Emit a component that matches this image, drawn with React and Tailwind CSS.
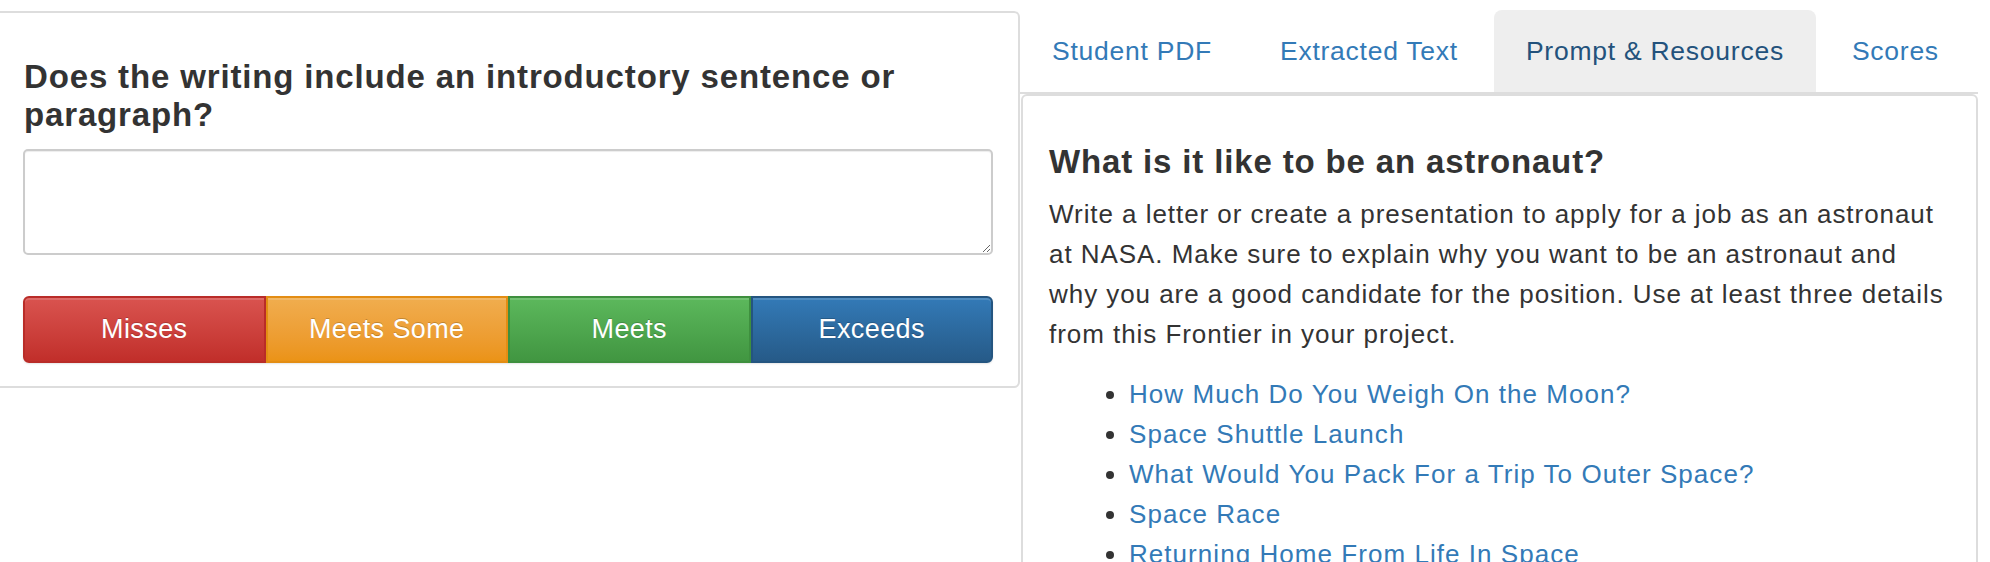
import React from "react";

const buttons = [
  { label: "Misses", cls: "bg-gradient-to-b from-[#d9534f] to-[#c12e2a] border-[#b92c28] rounded-l-[6px]" },
  { label: "Meets Some", cls: "bg-gradient-to-b from-[#f0ad4e] to-[#eb9316] border-[#e38d13]" },
  { label: "Meets", cls: "bg-gradient-to-b from-[#5cb85c] to-[#419641] border-[#3e8f3e]" },
  { label: "Exceeds", cls: "bg-gradient-to-b from-[#337ab7] to-[#265a88] border-[#245580] rounded-r-[6px]" },
];

const tabs = ["Student PDF", "Extracted Text", "Prompt & Resources", "Scores"];

const links = [
  "How Much Do You Weigh On the Moon?",
  "Space Shuttle Launch",
  "What Would You Pack For a Trip To Outer Space?",
  "Space Race",
  "Returning Home From Life In Space",
];

export default function App() {
  return (
    <div className="flex w-[1990px] h-[562px] overflow-hidden bg-white text-[#333] font-['Liberation_Sans',Arial,sans-serif]">
      {/* Left column */}
      <div className="w-[1020px] shrink-0 pt-[11px]">
        <div className="border-2 border-l-0 border-[#ddd] rounded-r-[6px] pl-[23px] pr-[25px] pt-[45px] pb-[23px]">
          <h3 className="text-[33px] leading-[38.4px] font-bold tracking-[0.85px] pl-[1px]">
            Does the writing include an introductory sentence or paragraph?
          </h3>
          <textarea
            className="mt-[14px] block w-full h-[106px] border-2 border-[#ccc] rounded-[5px] shadow-[inset_0_1px_1px_rgba(0,0,0,0.075)] outline-none"
            defaultValue=""
          />
          <div className="mt-[41px] flex h-[67px] shadow-[0_1px_2px_rgba(0,0,0,0.1)] rounded-[6px]">
            {buttons.map((b) => (
              <button
                key={b.label}
                className={`flex-1 flex items-center justify-center border-2 text-white text-[27px] tracking-[0.4px] shadow-[inset_0_2px_0_rgba(255,255,255,0.15)] [text-shadow:0_-1px_0_rgba(0,0,0,0.2)] ${b.cls}`}
              >
                {b.label}
              </button>
            ))}
          </div>
        </div>
      </div>

      {/* Right column */}
      <div className="w-[958px] shrink-0 pt-[10px]">
        <div className="flex border-b-2 border-[#ddd] h-[84px]">
          {tabs.map((t, i) => {
            const active = i === 2;
            return (
              <div
                key={t}
                className={`shrink-0 whitespace-nowrap h-[82px] px-[32px] mr-[4px] flex items-center text-[26.5px] tracking-[0.75px] rounded-t-[8px] pt-[2px] ${
                  active ? "bg-[#eee] text-[#23527c]" : "text-[#337ab7]"
                }`}
              >
                {t}
              </div>
            );
          })}
        </div>
        <div className="ml-[1px] border-2 border-[#ddd] rounded-t-[6px] h-[600px] pl-[26px] pr-[26px] pt-[48px]">
          <h3 className="text-[33px] leading-[35.2px] font-bold tracking-[0.85px]">
            What is it like to be an astronaut?
          </h3>
          <p className="mt-[15px] mb-[20px] text-[26px] leading-[40px] tracking-[0.95px]">
            Write a letter or create a presentation to apply for a job as an astronaut at NASA. Make sure to explain why you want to be an astronaut and why you are a good candidate for the position. Use at least three details from this Frontier in your project.
          </p>
          <ul className="list-disc pl-[80px] text-[26px] leading-[40px] tracking-[1.05px]">
            {links.map((l) => (
              <li key={l}>
                <a href="#" className="text-[#337ab7]">
                  {l}
                </a>
              </li>
            ))}
          </ul>
        </div>
      </div>
    </div>
  );
}
